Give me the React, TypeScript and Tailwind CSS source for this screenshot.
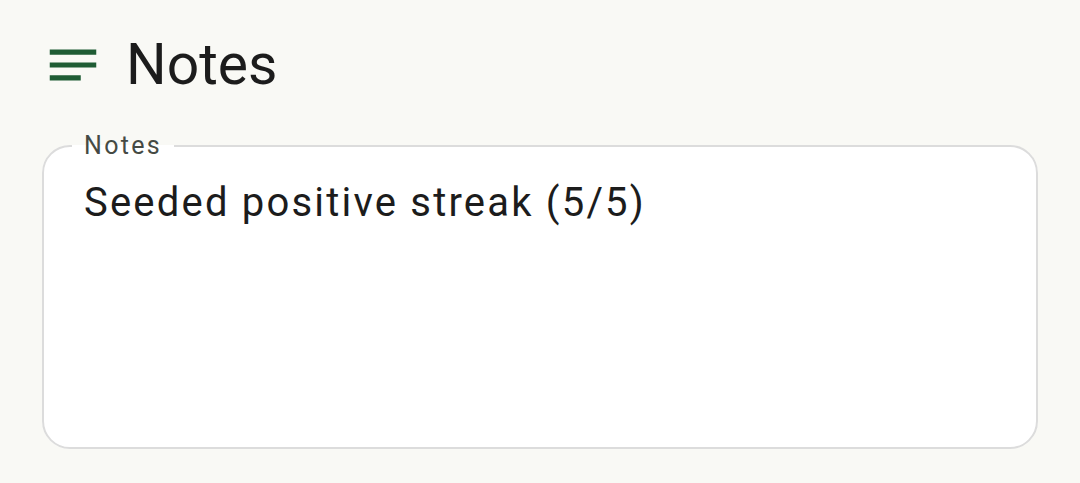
import { useState } from 'react';

function NotesIcon() {
  return (
    <svg viewBox="0 0 24 24" className="h-[62px] w-[62px] shrink-0" fill="#1f5c34">
      <path d="M3 18h12v-2H3v2zM3 6v2h18V6H3zm0 7h18v-2H3v2z" />
    </svg>
  );
}

export default function App() {
  const [notes] = useState('Seeded positive streak (5/5)');

  return (
    <div className="min-h-[483px] w-full bg-[#f9f9f5] font-['Roboto',sans-serif] text-[#1c1c1c]">
      <div className="flex items-center gap-[22px] pl-[42px] pt-[34px]">
        <NotesIcon />
        <h1 className="text-[57px] leading-[62px] font-normal">Notes</h1>
      </div>

      <fieldset className="mx-[42px] mt-[36px] h-[317px] rounded-[28px] border-2 border-[#dcdcdc] bg-white px-[40px]">
        <legend className="ml-[-12px] px-[12px] text-[25px] leading-[28px] tracking-[2.3px] text-[#454a44]">
          Notes
        </legend>
        <p className="mt-[19px] text-[40px] leading-[48px] tracking-[2.2px]">{notes}</p>
      </fieldset>
    </div>
  );
}
